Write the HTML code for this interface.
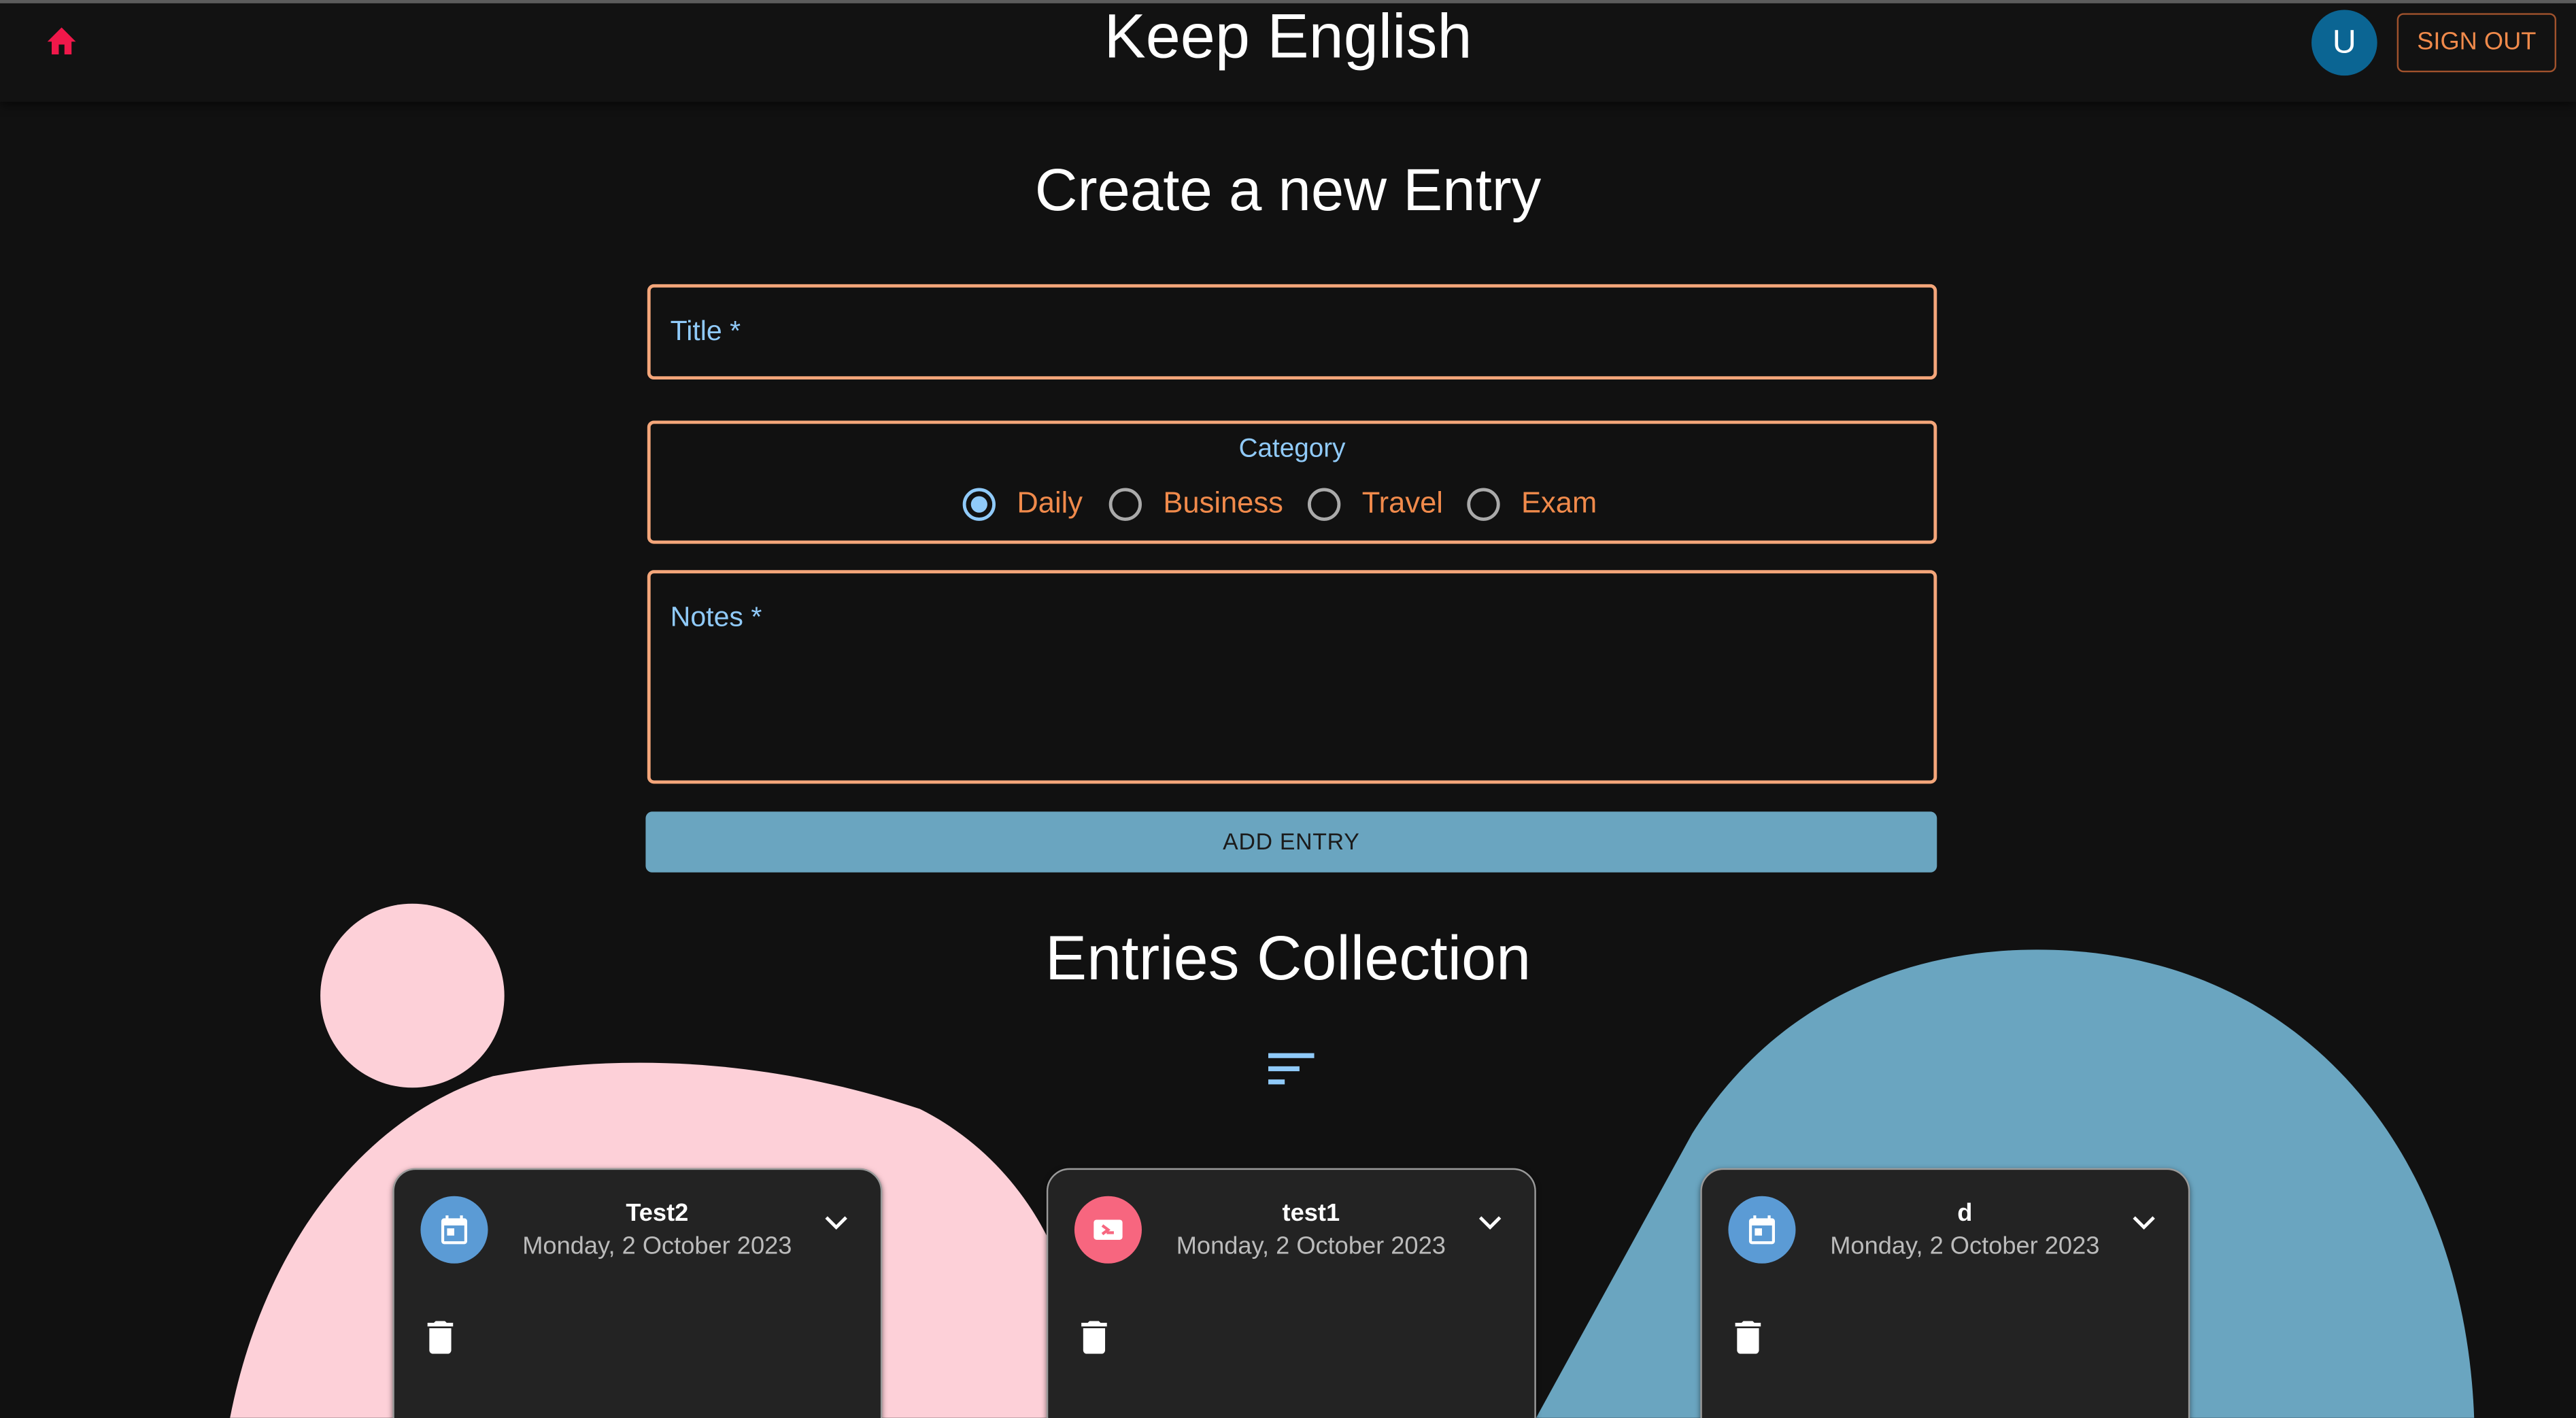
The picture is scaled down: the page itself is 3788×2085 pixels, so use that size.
<!DOCTYPE html>
<html><head><meta charset="utf-8"><style>
html,body{margin:0;padding:0;background:#111;overflow:hidden}
body{width:3788px;height:2085px;position:relative}
#w{position:absolute;left:0;top:0;width:1568px;height:863px;transform:scale(2.41582);transform-origin:0 0;font-family:"Liberation Sans","DejaVu Sans",sans-serif;color:#fff}
.a{position:absolute}
.field{position:absolute;left:394px;width:785px;border:2px solid #f4a67a;border-radius:4px;box-sizing:border-box}
.lbl{color:#90caf9;font-size:17px}
.card{position:absolute;top:711px;width:298px;height:170px;background:#232323;border-radius:14px;border:1px solid #9a9a9a;box-sizing:border-box;box-shadow:0 1px 3px rgba(0,0,0,.5)}
.card .t{position:absolute;left:50px;right:26px;top:18px;text-align:center;font-weight:bold;font-size:15px}
.card .d{position:absolute;left:40px;right:16px;top:38px;text-align:center;font-size:15px;color:#bbb}
.radio{position:absolute;top:297px;width:16px;height:16px;border:2px solid #aaa;border-radius:50%}
.rt{position:absolute;top:296px;color:#f08a4b;font-size:18px}
</style></head><body><div id="w">
<svg class="a" style="left:0;top:0" width="1568" height="863">
<path d="M140 863 C160 760 220 680 300 655 C380 640 470 645 560 675 C600 695 630 730 645 770 L660 863 Z" fill="#fdd0d8"/>
<circle cx="251" cy="606" r="56" fill="#fdd0d8"/>
<path d="M935 863 L1030 690 C1080 610 1160 578 1240 578 C1400 578 1500 700 1506 863 Z" fill="#6aa5c0"/>
</svg>
<div class="a" style="left:0;top:0;width:1568px;height:62px;background:#121212;box-shadow:0 2px 6px rgba(0,0,0,.6)"></div>
<div class="a" style="left:0;top:0;width:1568px;height:2px;background:#5c5c5c"></div>
<svg class="a" style="left:27px;top:15px" width="21" height="19" viewBox="0 0 24 22"><path d="M10 21v-7h4v7h5v-9h3L12 2 2 12h3v9z" fill="#f0184a"/></svg>
<div class="a" style="left:0;width:1568px;top:0;text-align:center;font-size:38px;line-height:46px">Keep English</div>
<div class="a" style="left:1407px;top:6px;width:40px;height:40px;border-radius:50%;background:#0b6593;text-align:center;line-height:40px;font-size:20px">U</div>
<div class="a" style="left:1459px;top:8px;width:97px;height:36px;border:1px solid #a0522d;border-radius:4px;box-sizing:border-box;color:#f08a4b;font-size:15px;text-align:center;line-height:34px">SIGN OUT</div>
<div class="a" style="left:0;width:1568px;top:95px;text-align:center;font-size:36px">Create a new Entry</div>
<div class="field" style="top:173px;height:58px"><span class="a lbl" style="left:12px;top:17px">Title *</span></div>
<div class="field" style="top:256px;height:75px"><div class="a lbl" style="left:0;right:0;top:7px;text-align:center;font-size:16px">Category</div></div>
<div class="radio" style="left:586px;border-color:#90caf9"><div class="a" style="left:3px;top:3px;width:10px;height:10px;border-radius:50%;background:#90caf9"></div></div>
<div class="rt" style="left:619px">Daily</div>
<div class="radio" style="left:675px"></div><div class="rt" style="left:708px">Business</div>
<div class="radio" style="left:796px"></div><div class="rt" style="left:829px">Travel</div>
<div class="radio" style="left:893px"></div><div class="rt" style="left:926px">Exam</div>
<div class="field" style="top:347px;height:130px"><span class="a lbl" style="left:12px;top:17px">Notes *</span></div>
<div class="a" style="left:393px;top:494px;width:786px;height:37px;background:#6aa5c0;border-radius:4px;color:#1b1b1b;font-size:14px;text-align:center;line-height:37px;letter-spacing:.3px">ADD ENTRY</div>
<div class="a" style="left:0;width:1568px;top:563px;text-align:center;font-size:38px">Entries Collection</div>
<svg class="a" style="left:772px;top:641px" width="28" height="20"><g fill="#90caf9"><rect x="0" y="0" width="28" height="3"/><rect x="0" y="8" width="19" height="3"/><rect x="0" y="16" width="10" height="3"/></g></svg>

<div class="card" style="left:239px">
<div class="a" style="left:16px;top:16px;width:41px;height:41px;border-radius:50%;background:#5b9bd5"></div>
<svg class="a" style="left:26px;top:26px" width="21" height="21" viewBox="0 0 24 24"><path d="M19 4h-1V2h-2v2H8V2H6v2H5a2 2 0 0 0-2 2v14a2 2 0 0 0 2 2h14a2 2 0 0 0 2-2V6a2 2 0 0 0-2-2zm0 16H5V9h14zM7 11h5v5H7z" fill="#fff"/></svg>
<div class="t">Test2</div><div class="d">Monday, 2 October 2023</div>
<svg class="a" style="left:262px;top:28px" width="14" height="10"><path d="M1 1l6 6 6-6" stroke="#fff" stroke-width="2" fill="none"/></svg>
<svg class="a" style="left:20px;top:92px" width="16" height="20" viewBox="0 0 14 18"><path d="M1 16a2 2 0 0 0 2 2h8a2 2 0 0 0 2-2V4H1zM14 1h-3.5l-1-1h-5l-1 1H0v2h14z" fill="#fff"/></svg>
</div>
<div class="card" style="left:637px">
<div class="a" style="left:16px;top:16px;width:41px;height:41px;border-radius:50%;background:#f7667f"></div>
<svg class="a" style="left:26px;top:26px" width="21" height="21" viewBox="0 0 24 24"><rect x="2" y="5" width="20" height="14" rx="2" fill="#fff"/><path d="M8 9l4 3-4 3M11 14l5 0" stroke="#f7667f" stroke-width="2" fill="none"/></svg>
<div class="t">test1</div><div class="d">Monday, 2 October 2023</div>
<svg class="a" style="left:262px;top:28px" width="14" height="10"><path d="M1 1l6 6 6-6" stroke="#fff" stroke-width="2" fill="none"/></svg>
<svg class="a" style="left:20px;top:92px" width="16" height="20" viewBox="0 0 14 18"><path d="M1 16a2 2 0 0 0 2 2h8a2 2 0 0 0 2-2V4H1zM14 1h-3.5l-1-1h-5l-1 1H0v2h14z" fill="#fff"/></svg>
</div>
<div class="card" style="left:1035px">
<div class="a" style="left:16px;top:16px;width:41px;height:41px;border-radius:50%;background:#5b9bd5"></div>
<svg class="a" style="left:26px;top:26px" width="21" height="21" viewBox="0 0 24 24"><path d="M19 4h-1V2h-2v2H8V2H6v2H5a2 2 0 0 0-2 2v14a2 2 0 0 0 2 2h14a2 2 0 0 0 2-2V6a2 2 0 0 0-2-2zm0 16H5V9h14zM7 11h5v5H7z" fill="#fff"/></svg>
<div class="t">d</div><div class="d">Monday, 2 October 2023</div>
<svg class="a" style="left:262px;top:28px" width="14" height="10"><path d="M1 1l6 6 6-6" stroke="#fff" stroke-width="2" fill="none"/></svg>
<svg class="a" style="left:20px;top:92px" width="16" height="20" viewBox="0 0 14 18"><path d="M1 16a2 2 0 0 0 2 2h8a2 2 0 0 0 2-2V4H1zM14 1h-3.5l-1-1h-5l-1 1H0v2h14z" fill="#fff"/></svg>
</div>
</div></body></html>
